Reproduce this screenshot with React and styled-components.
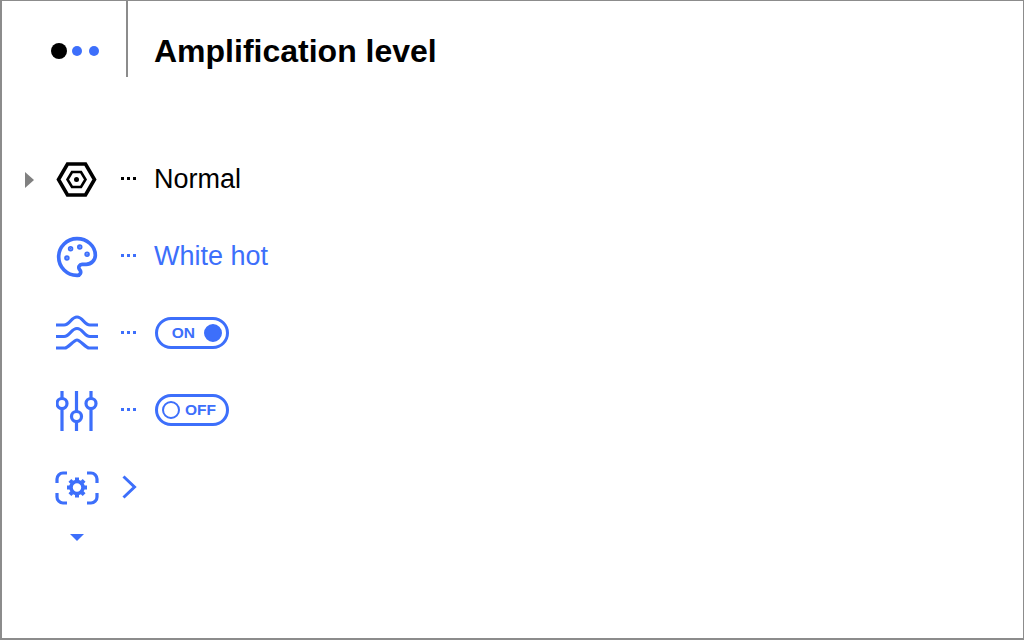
import React from 'react';
import styled, { createGlobalStyle } from 'styled-components';
import { Palette } from 'lucide-react';

const BLUE = '#3d6ffb';

const GlobalStyle = createGlobalStyle`
  html, body {
    margin: 0;
    padding: 0;
    background: #fff;
  }
`;

const Frame = styled.div`
  box-sizing: border-box;
  width: 1024px;
  height: 640px;
  border: 2px solid #8c8c8c;
  border-width: 1px 1px 2px 2px;
  font-family: 'Liberation Sans', Arial, sans-serif;
  color: #000;
`;

// Header
const Header = styled.div`
  display: flex;
  align-items: stretch;
  height: 76px;
`;

const Pager = styled.div`
  box-sizing: border-box;
  flex: 0 0 126px;
  display: flex;
  align-items: center;
  gap: 6px;
  padding: 24px 0 0 49px;
  border-right: 2px solid #8c8c8c;
  margin-right: 26px;
`;

const Dot = styled.span`
  flex: none;
  width: ${props => (props.$active ? 16 : 10)}px;
  height: ${props => (props.$active ? 16 : 10)}px;
  margin-right: ${props => (props.$active ? -1 : 1)}px;
  border-radius: 50%;
  background: ${props => (props.$active ? '#000' : BLUE)};
`;

const Title = styled.h1`
  margin: 0;
  padding-top: 34px;
  font-size: 32px;
  font-weight: 700;
  line-height: 1;
`;

// Menu
const Menu = styled.div`
  margin-top: 64px;
  display: flex;
  flex-direction: column;
`;

const Row = styled.div`
  display: grid;
  grid-template-columns: 44px 63px 36px auto;
  align-items: center;
  height: 77px;
  color: ${props => (props.$selected ? '#000' : BLUE)};
`;

const Marker = styled.span`
  justify-self: start;
  width: 0;
  height: 0;
  margin-left: 23px;
  border-style: solid;
  border-width: 8px 0 8px 9px;
  border-color: transparent transparent transparent #808080;
`;

const IconCell = styled.span`
  grid-column: 2;
  display: flex;
  justify-content: center;
  align-items: center;
  margin-right: 1px;
`;

const Ellipsis = styled.span`
  grid-column: 3;
  display: flex;
  gap: 3px;
  justify-content: center;
  margin-left: 2px;
  margin-bottom: 2px;
`;

const EllipsisDot = styled.i`
  width: 3px;
  height: 3px;
  background: currentColor;
`;

const Label = styled.span`
  grid-column: 4;
  margin-left: 9px;
  font-size: 27px;
`;

const Toggle = styled.span`
  grid-column: 4;
  margin: 0 0 2px 10px;
  box-sizing: border-box;
  width: 74px;
  height: 32px;
  border: 3px solid ${BLUE};
  border-radius: 16px;
  display: flex;
  align-items: center;
  flex-direction: ${props => (props.$on ? 'row' : 'row-reverse')};
  justify-content: flex-end;
  gap: ${props => (props.$on ? 9 : 5)}px;
  padding: 0 4px;
  font-size: 15.5px;
  font-weight: 700;
  color: ${BLUE};
`;

const Knob = styled.span`
  box-sizing: border-box;
  flex: none;
  width: 18px;
  height: 18px;
  border-radius: 50%;
  border: 2.5px solid ${BLUE};
  background: ${props => (props.$on ? BLUE : 'transparent')};
`;

const Chevron = styled.span`
  grid-column: 3;
  display: flex;
  justify-content: center;
  margin: 0 0 2px 6px;
`;

const DownMarker = styled.span`
  display: block;
  width: 0;
  height: 0;
  margin: 8px 0 0 68px;
  border-style: solid;
  border-width: 7px 7px 0 7px;
  border-color: ${BLUE} transparent transparent transparent;
`;

const HexIcon = () => (
  <svg width="42" height="36" viewBox="0 0 42 36" fill="none" stroke="currentColor" strokeWidth="3.600">
    <path d="M11.500 2h18l9 15.500-9 15.500h-18L2.500 17.500z" />
    <path d="M16 10h9l4.500 7.500-4.500 7.500h-9l-4.500-7.500z" strokeWidth="2.600" />
    <circle cx="20.500" cy="17.500" r="2.500" fill="currentColor" stroke="none" />
  </svg>
);

const WavesIcon = () => (
  <svg width="42" height="38" viewBox="0 0 42 38" fill="none" stroke="currentColor" strokeWidth="3.200">
    <path d="M0 10h8c6 0 7-8 13-8s7 8 13 8h8" />
    <path d="M0 21.500h8c6 0 7-8 13-8s7 8 13 8h8" />
    <path d="M0 33h9c3 0 9-8 12-8s9 8 12 8h9" />
  </svg>
);

const SlidersIcon = () => (
  <svg width="42" height="40" viewBox="0 0 42 40" fill="none" stroke="currentColor" strokeWidth="3.200">
    <path d="M6 0v7.500M6 17.500V40M20.500 0v20.500M20.500 30.500V40M35 0v7.500M35 17.500V40" />
    <circle cx="6" cy="12.500" r="5" />
    <circle cx="20.500" cy="25.500" r="5" />
    <circle cx="35" cy="12.500" r="5" />
  </svg>
);

const CaptureIcon = () => (
  <svg width="44" height="34" viewBox="0 0 44 34" fill="none" stroke="currentColor" strokeWidth="3.200">
    <path d="M12 2H8a6 6 0 0 0-6 6v4M32 2h4a6 6 0 0 1 6 6v4M12 32H8a6 6 0 0 1-6-6v-4M32 32h4a6 6 0 0 0 6-6v-4" />
    <circle cx="22" cy="16.500" r="6" strokeWidth="3.600" />
    <path
      d="M22 6.500v3M22 23.500v3M12 16.500h3M29 16.500h3M14.900 9.400l2.100 2.100M27 21.500l2.100 2.100M29.100 9.400L27 11.500M17 21.500l-2.100 2.100"
      strokeWidth="4"
    />
  </svg>
);

const ChevronIcon = () => (
  <svg width="16" height="24" viewBox="0 0 16 24" fill="none" stroke={BLUE} strokeWidth="3">
    <path d="M1.500 1.500L12.500 12 1.500 22.500" />
  </svg>
);

const Dots = () => (
  <Ellipsis>
    <EllipsisDot />
    <EllipsisDot />
    <EllipsisDot />
  </Ellipsis>
);

const App = () => (
  <>
    <GlobalStyle />
    <Frame>
      <Header>
        <Pager>
          <Dot $active />
          <Dot />
          <Dot />
        </Pager>
        <Title>Amplification level</Title>
      </Header>
      <Menu>
        <Row $selected>
          <Marker />
          <IconCell><HexIcon /></IconCell>
          <Dots />
          <Label>Normal</Label>
        </Row>
        <Row>
          <IconCell><Palette size={44} strokeWidth={2} /></IconCell>
          <Dots />
          <Label>White hot</Label>
        </Row>
        <Row>
          <IconCell><WavesIcon /></IconCell>
          <Dots />
          <Toggle $on>ON<Knob $on /></Toggle>
        </Row>
        <Row>
          <IconCell><SlidersIcon /></IconCell>
          <Dots />
          <Toggle>OFF<Knob /></Toggle>
        </Row>
        <Row>
          <IconCell><CaptureIcon /></IconCell>
          <Chevron><ChevronIcon /></Chevron>
        </Row>
      </Menu>
      <DownMarker />
    </Frame>
  </>
);

export default App;
